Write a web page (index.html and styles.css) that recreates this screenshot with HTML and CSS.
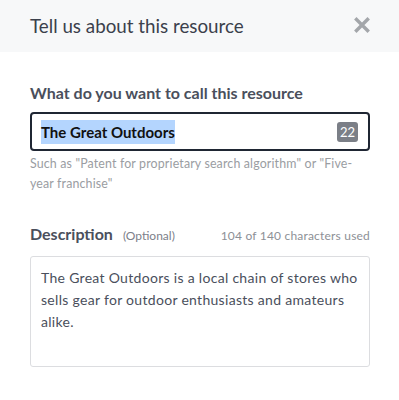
FILE: index.html
```html
<!DOCTYPE html>
<html lang="en">
<head>
    <meta charset="UTF-8">
    <title>Tell us about this resource</title>
    <link rel="stylesheet" href="styles.css">
</head>
<body>
    <div class="modal">
        <!-- Header -->
        <div class="modal-header">
            <h2 class="modal-title">Tell us about this resource</h2>
            <button class="close-button" aria-label="Close">
                <svg width="16" height="16" viewBox="0 0 16 16">
                    <path d="M2.5 2.5L13.5 13.5M13.5 2.5L2.5 13.5" stroke="#a3a6aa" stroke-width="3.4" stroke-linecap="square"/>
                </svg>
            </button>
        </div>

        <div class="modal-body">
            <!-- Name field -->
            <div class="field">
                <label class="field-label">What do you want to call this resource</label>
                <div class="input-box">
                    <span class="input-text"><span class="selected">The Great Outdoors</span></span>
                    <span class="count-badge">22</span>
                </div>
                <p class="help-text">Such as "Patent for proprietary search algorithm" or "Five-year franchise"</p>
            </div>

            <!-- Description field -->
            <div class="field field-description">
                <div class="label-row">
                    <label class="field-label">Description</label>
                    <span class="optional">(Optional)</span>
                    <span class="char-count">104 of 140 characters used</span>
                </div>
                <div class="textarea-box">The Great Outdoors is a local chain of stores who sells gear for outdoor enthusiasts and amateurs alike.</div>
            </div>
        </div>
    </div>
</body>
</html>
```

FILE: styles.css
```css
/* General body styling */
body {
    margin: 0;
    font-family: 'Lato', 'Noto Sans', sans-serif;
    background-color: #ffffff;
    color: #4a4f5c;
}

/* Header bar */
.modal-header {
    display: flex;
    align-items: center;
    justify-content: space-between;
    height: 52px;
    padding: 0 29px 0 30px;
    background-color: #f7f8f9;
}

.modal-title {
    margin: 0;
    font-size: 18.8px;
    font-weight: normal;
    color: #3b404c;
    margin-top: -2px;
}

.close-button {
    background: none;
    border: none;
    padding: 0;
    display: flex;
    cursor: pointer;
    margin-top: -3px;
}

/* Body */
.modal-body {
    padding: 31px 29px 0 30px;
}

.field-label {
    display: block;
    font-size: 16px;
    font-weight: bold;
    color: #4a4f5c;
}

/* Name input */
.input-box {
    display: flex;
    align-items: center;
    justify-content: space-between;
    margin-top: 10px;
    height: 35px;
    padding: 0 10px 0 9px;
    border: 2px solid #1f2633;
    border-radius: 4px;
}

.input-text {
    font-size: 15px;
    font-weight: bold;
    color: #111111;
}

.selected {
    background-color: #b4d5fe;
    padding: 3px 0;
}

.count-badge {
    background-color: #7b7f87;
    color: #ffffff;
    font-size: 13px;
    border-radius: 3px;
    padding: 2px 3px;
    line-height: 16px;
}

.help-text {
    margin: 3px 0 0;
    font-size: 12.4px;
    letter-spacing: 0.15px;
    line-height: 20px;
    color: #9a9da2;
}

/* Description */
.field-description {
    margin-top: 30px;
}

.label-row {
    display: flex;
    align-items: baseline;
}

.optional {
    margin-left: 10px;
    font-size: 12px;
    color: #7c8089;
}

.char-count {
    margin-left: auto;
    font-size: 12px;
    letter-spacing: 0.2px;
    color: #8d9096;
}

.textarea-box {
    margin-top: 13px;
    height: 89px;
    padding: 10px 10px 10px 10px;
    border: 1px solid #dcdde0;
    border-radius: 3px;
    font-size: 14px;
    letter-spacing: 0.3px;
    line-height: 22px;
    color: #4a4f5c;
}
```
